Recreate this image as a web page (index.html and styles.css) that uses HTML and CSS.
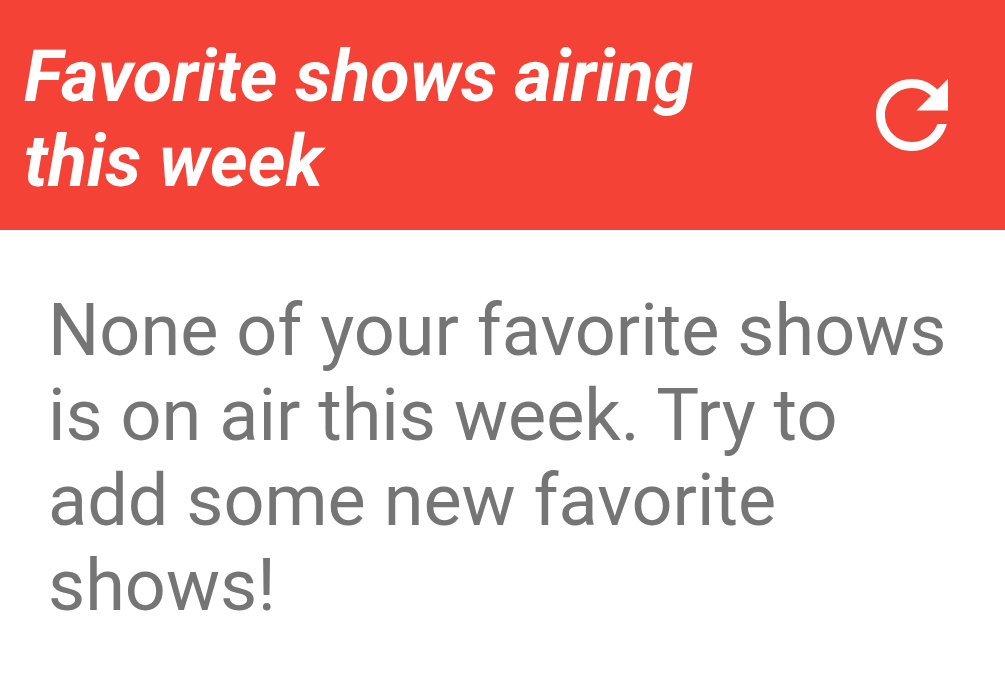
FILE: index.html
```html
<!DOCTYPE html>
<html lang="en">
<head>
<meta charset="utf-8">
<meta name="viewport" content="width=device-width, initial-scale=1">
<title>Favorite shows</title>
<link rel="stylesheet" href="styles.css">
</head>
<body>
<header class="bar">
  <h1 class="title">Favorite shows airing this week</h1>
  <button class="refresh" type="button" aria-label="Refresh">
    <svg class="icon" viewBox="0 0 24 24" aria-hidden="true"><path d="M17.65 6.35C16.2 4.9 14.21 4 12 4c-4.42 0-7.99 3.58-7.99 8s3.57 8 7.99 8c3.73 0 6.84-2.55 7.73-6h-2.08c-.82 2.33-3.04 4-5.65 4-3.31 0-6-2.69-6-6s2.69-6 6-6c1.66 0 3.14.69 4.22 1.78L13 11h7V4l-2.35 2.35z"/></svg>
  </button>
</header>
<main class="content">
  <p class="message">None of your favorite shows is on air this week. Try to add some new favorite shows!</p>
</main>
</body>
</html>
```
FILE: styles.css
```css
* {
  box-sizing: border-box;
}

body {
  margin: 0;
  background: #fff;
  font-family: Roboto, sans-serif;
}

.bar {
  display: flex;
  align-items: center;
  justify-content: space-between;
  gap: 96px;
  padding: 26px 39px 26px 24px;
  background: #f44336;
}

.title {
  margin: 0;
  padding-top: 8px;
  color: #fff;
  font-size: 72px;
  font-weight: 700;
  font-style: italic;
  line-height: 85px;
}

.refresh {
  flex: none;
  padding: 0;
  border: 0;
  background: none;
  cursor: pointer;
}

.icon {
  display: block;
  width: 108px;
  height: 108px;
  fill: #fff;
}

.content {
  padding: 58px 48px;
}

.message {
  margin: 0;
  color: #757575;
  font-size: 72px;
  line-height: 85px;
}
```
